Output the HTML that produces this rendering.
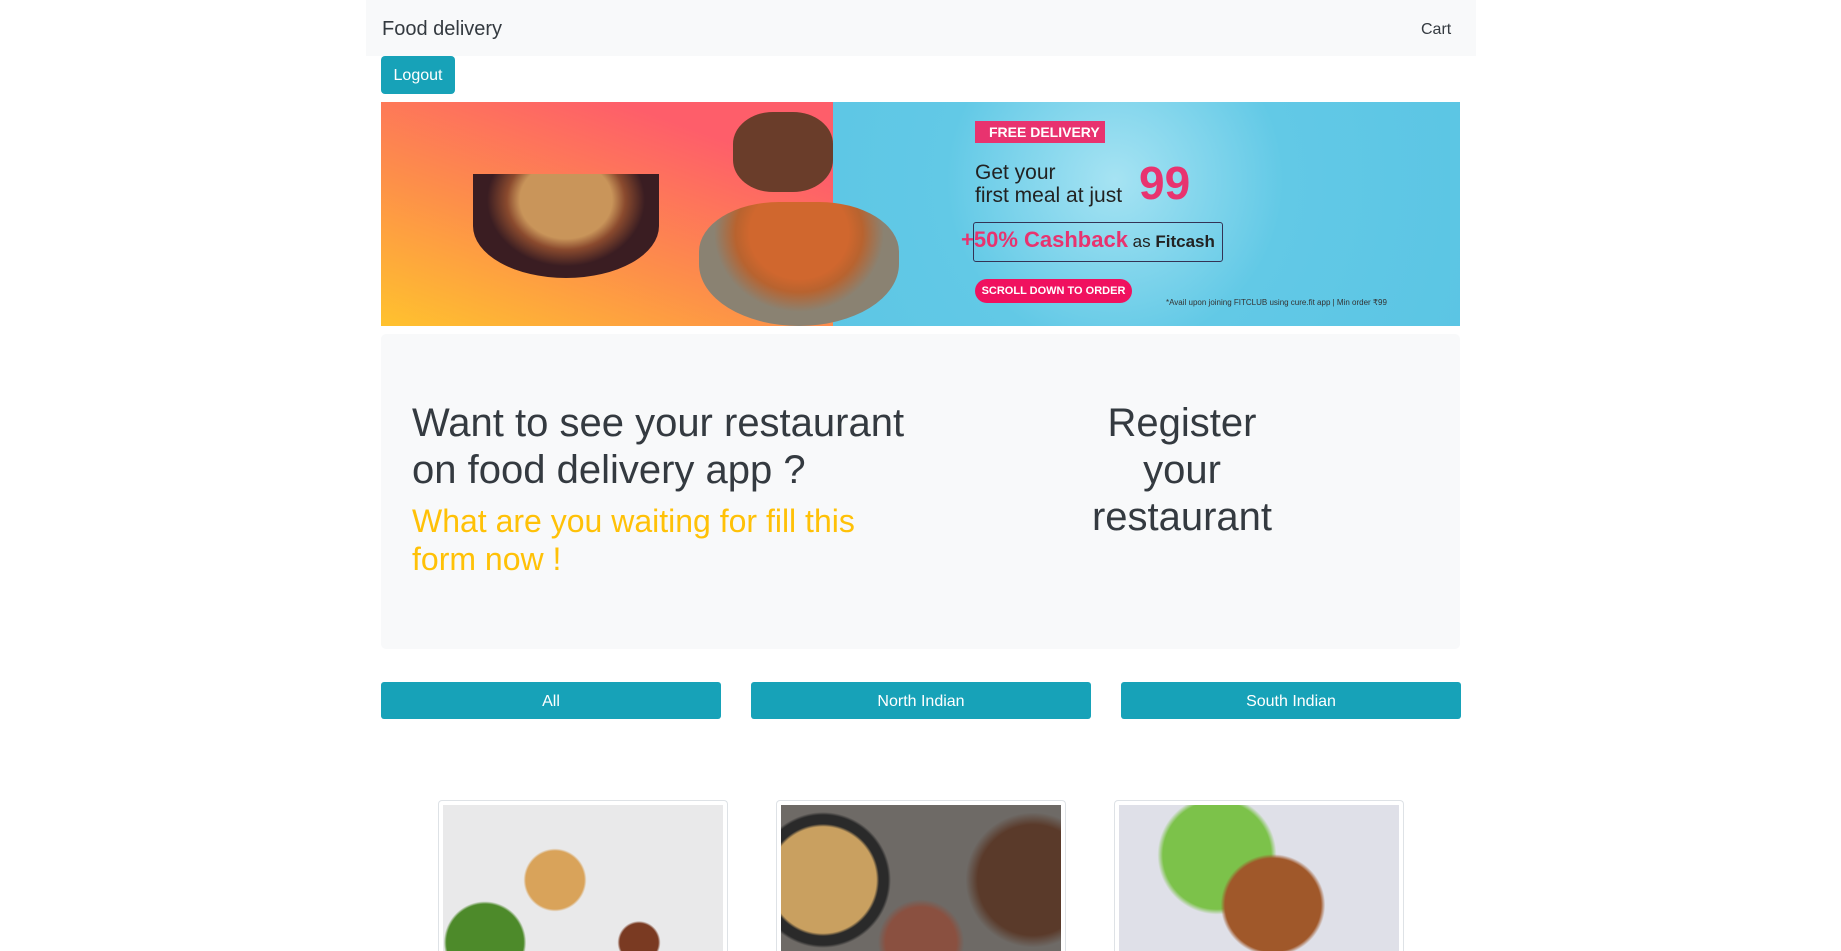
<!DOCTYPE html>
<html style="height:951px;overflow:hidden"><head><meta charset="utf-8"><style>
*{box-sizing:border-box;margin:0;padding:0}
body{width:1841px;height:951px;overflow:hidden;background:#fff;font-family:"Liberation Sans",sans-serif;color:#212529;position:relative}
.abs{position:absolute}
.nav{left:366px;top:0;width:1110px;height:56px;background:#f8f9fa}
.brand{left:382px;top:18px;font-size:20px;color:#343a40}
.cart{left:1421px;top:21px;font-size:16px;color:#343a40}
.logout{left:381px;top:56px;width:74px;height:38px;background:#17a2b8;border-radius:4px;color:#fff;font-size:16px;text-align:center;line-height:40px}
.banner{left:381px;top:102px;width:1079px;height:224px;overflow:hidden}
.left{left:0;top:0;width:452px;height:224px;background:linear-gradient(20deg,#ffc22e 0%,#fd8e4a 40%,#fe5e6a 80%)}
.right{left:452px;top:0;width:627px;height:224px;background:radial-gradient(circle at 45% 35%,#a6e3f3 0%,#62c9e6 45%,#5bc5e4 100%)}
.jumbo{left:381px;top:334px;width:1079px;height:315px;background:#f8f9fa;border-radius:5px}
h1{font-weight:400;font-size:40px;line-height:47px;color:#343a40}
.btn{height:37px;top:682px;width:340px;background:#17a2b8;border-radius:3px;color:#fff;font-size:16px;text-align:center;line-height:40px}
.card{top:800px;width:290px;height:151px;border:1px solid #dee2e6;border-bottom:none;border-radius:4px 4px 0 0;background:#fff;padding:4px 4px 0;overflow:hidden}
.card div{width:100%;height:250px}
</style></head><body>
<div class="abs nav"></div>
<div class="abs brand">Food delivery</div>
<div class="abs cart">Cart</div>
<div class="abs logout">Logout</div>
<div class="abs banner">
 <div class="abs left"></div>
 <div class="abs right"></div>
 <div class="abs" style="left:92px;top:72px;width:186px;height:104px;border-radius:0 0 50% 50%;background:radial-gradient(ellipse at 50% 25%,#c9955a 0 35%,#8a4a2e 45%,#3a1d22 60%)"></div>
 <div class="abs" style="left:318px;top:100px;width:200px;height:124px;border-radius:40% 40% 50% 50%;background:radial-gradient(ellipse at 50% 25%,#d0672e 0 35%,#b8632f 45%,#8a8272 60%)"></div>
 <div class="abs" style="left:352px;top:10px;width:100px;height:80px;border-radius:40%;background:#6a3d2a"></div>
 <div class="abs" style="left:594px;top:19px;width:130px;height:22px;background:#e8336f;color:#fff;font-weight:700;font-size:14px;line-height:22px;padding-left:14px">FREE DELIVERY</div>
 <div class="abs" style="left:594px;top:59px;font-size:21px;line-height:23px;color:#222">Get your<br>first meal at just</div>
 <div class="abs" style="left:758px;top:54px;font-size:46px;font-weight:700;color:#e8336f">99</div>
 <div class="abs" style="left:592px;top:120px;width:250px;height:40px;border:1px solid #335;border-radius:3px"></div>
 <div class="abs" style="left:580px;top:125px;font-size:22px;color:#e8336f;font-weight:700">+50% Cashback<span style="color:#222;font-size:17px;font-weight:400"> as <b>Fitcash</b></span></div>
 <div class="abs" style="left:594px;top:177px;width:157px;height:24px;border-radius:12px;background:#f0115f;color:#fff;font-size:11px;font-weight:700;line-height:24px;text-align:center">SCROLL DOWN TO ORDER</div>
 <div class="abs" style="left:785px;top:196px;font-size:8px;color:#333">*Avail upon joining FITCLUB using cure.fit app | Min order ₹99</div>
</div>
<div class="abs jumbo"></div>
<h1 class="abs" style="left:412px;top:400px;width:540px">Want to see your restaurant on food delivery app ?</h1>
<div class="abs" style="left:412px;top:502px;width:500px;font-size:32px;line-height:38px;color:#ffc107">What are you waiting for fill this form now !</div>
<h1 class="abs" style="left:1082px;top:400px;width:200px;text-align:center">Register your restaurant</h1>
<div class="abs btn" style="left:381px">All</div>
<div class="abs btn" style="left:751px">North Indian</div>
<div class="abs btn" style="left:1121px">South Indian</div>
<div class="abs card" style="left:438px"><div style="background:radial-gradient(circle at 40% 30%,#d9a35a 0 12%,transparent 13%),radial-gradient(circle at 70% 55%,#7a3a22 0 8%,transparent 9%),radial-gradient(circle at 15% 55%,#4d8a2a 0 14%,transparent 15%),#e9e9ea"></div></div>
<div class="abs card" style="left:776px"><div style="background:radial-gradient(circle at 15% 30%,#c9a060 0 18%,#2a2a2a 19% 22%,transparent 23%),radial-gradient(circle at 50% 55%,#8a5040 0 18%,transparent 22%),radial-gradient(circle at 90% 30%,#5a3a2a 0 18%,transparent 22%),#6e6a66"></div></div>
<div class="abs card" style="left:1114px"><div style="background:radial-gradient(ellipse at 55% 40%,#a0582a 0 22%,transparent 24%),radial-gradient(circle at 35% 20%,#7cc24a 0 20%,transparent 22%),#dfe0e8"></div></div>
</body></html>
